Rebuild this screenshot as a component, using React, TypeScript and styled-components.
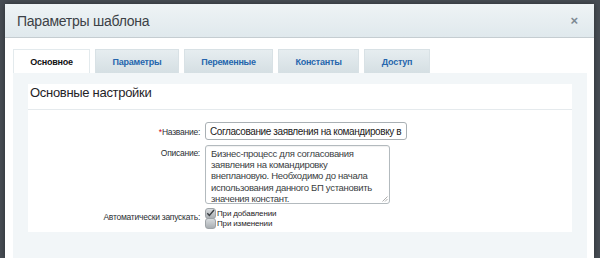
import React from "react";
import styled, { createGlobalStyle } from "styled-components";

const Global = createGlobalStyle`
  html, body { margin: 0; padding: 0; }
  body {
    background: #474d54;
    font-family: "Liberation Sans", Arial, sans-serif;
    height: 258px;
    overflow: hidden;
  }
`;

const Dialog = styled.div`
  margin: 4px 6px 0 5px;
  height: 254px;
  background: #fff;
  box-shadow: 0 0 6px rgba(0, 0, 0, 0.4);
  display: flex;
  flex-direction: column;
`;

const Header = styled.div`
  height: 33px;
  flex: none;
  background: linear-gradient(#eef3f5, #e0e9ed);
  border-bottom: 1px solid #c5cdd1;
  display: flex;
  align-items: center;
  justify-content: space-between;
  padding: 0 16px 0 12px;
`;

const Title = styled.div`
  font-size: 14px;
  letter-spacing: -0.25px;
  color: #3c4146;
  padding-top: 1px;
`;

const Close = styled.div`
  font-size: 13px;
  color: #7c8992;
  font-weight: bold;
  line-height: 1;
`;

const Body = styled.div`
  flex: 1;
  padding: 11px 7px 0 8px;
  display: flex;
  flex-direction: column;
`;

const Tabs = styled.div`
  display: flex;
  gap: 5px;
  height: 24px;
`;

const Tab = styled.div<{ $active?: boolean; $w: number }>`
  width: ${(p) => p.$w}px;
  height: 24px;
  display: flex;
  align-items: center;
  justify-content: center;
  font-size: 9px;
  letter-spacing: -0.25px;
  font-weight: bold;
  color: ${(p) => (p.$active ? "#111" : "#2666ad")};
  background: ${(p) =>
    p.$active ? "#fff" : "linear-gradient(#e6edf0, #d5dfe3)"};
  border: 1px solid ${(p) => (p.$active ? "#e3eaed" : "#d8e1e5")};
  border-bottom: none;
  box-sizing: border-box;
  padding-top: 1px;
`;

const Panel = styled.div`
  flex: 1;
  background: #f2f6f8;
  padding: 11px 15px 18px 15px;
  display: flex;
  flex-direction: column;
`;

const Card = styled.div`
  background: #fff;
  display: flex;
  flex-direction: column;
`;

const CardTitle = styled.div`
  font-size: 13px;
  letter-spacing: -0.3px;
  color: #1f2327;
  padding: 1px 0 0 2px;
  box-sizing: border-box;
  border-bottom: 1px solid #e5eaed;
  height: 26px;
`;

const Form = styled.div`
  display: grid;
  grid-template-columns: 172px 1fr;
  column-gap: 5px;
  row-gap: 5px;
  padding: 12px 0 3px 0;
  align-items: start;
`;

const Label = styled.div<{ $center?: boolean }>`
  font-size: 8.5px;
  letter-spacing: -0.25px;
  color: #2b2f33;
  text-align: right;
  padding-top: ${(p) => (p.$center ? "5px" : "3px")};
`;

const Req = styled.span`
  color: #d0021b;
`;

const Input = styled.div`
  width: 202px;
  height: 18px;
  box-sizing: border-box;
  border: 1px solid #a9b0b4;
  border-radius: 3px;
  font-size: 10px;
  letter-spacing: -0.4px;
  color: #222;
  padding: 3px 0 0 4px;
  white-space: nowrap;
  overflow: hidden;
`;

const TextArea = styled.div`
  position: relative;
  width: 185px;
  height: 59px;
  box-sizing: border-box;
  border: 1px solid #b3babe;
  border-radius: 3px;
  box-shadow: inset 0 1px 1px rgba(0, 0, 0, 0.06);
  font-size: 9.5px;
  letter-spacing: -0.3px;
  line-height: 11.2px;
  color: #3a3e42;
  padding: 2px 4px 0 5px;
`;

const Line = styled.div`
  white-space: nowrap;
`;

const Grip = styled.svg`
  position: absolute;
  right: 1px;
  bottom: 1px;
`;

const Checks = styled.div`
  display: flex;
  flex-direction: column;
  margin-top: -1px;
`;

const CheckRow = styled.div`
  display: flex;
  align-items: center;
  height: 10.5px;
  font-size: 8px;
  letter-spacing: -0.15px;
  color: #1f2327;
`;

const Box = styled.span`
  width: 11px;
  height: 11px;
  box-sizing: border-box;
  border-radius: 3px;
  background: linear-gradient(#d8dcdf, #a9aeb2);
  border: 1px solid #9ea3a7;
  margin-right: 1px;
  display: inline-flex;
  align-items: center;
  justify-content: center;
`;

const Check = () => (
  <svg width="9" height="8" viewBox="0 0 9 8">
    <path d="M1.3 4.2 L3.4 6.4 L8 1" stroke="#3a3e42" strokeWidth="1.4" fill="none" />
  </svg>
);

export default function App() {
  return (
    <>
      <Global />
      <Dialog>
        <Header>
          <Title>Параметры шаблона</Title>
          <Close>×</Close>
        </Header>
        <Body>
          <Tabs>
            <Tab $active $w={77}>Основное</Tab>
            <Tab $w={84}>Параметры</Tab>
            <Tab $w={89}>Переменные</Tab>
            <Tab $w={81}>Константы</Tab>
            <Tab $w={66}>Доступ</Tab>
          </Tabs>
          <Panel>
            <Card>
              <CardTitle>Основные настройки</CardTitle>
              <Form>
                <Label $center>
                  <Req>*</Req>Название:
                </Label>
                <Input>Согласование заявления на командировку в</Input>
                <Label>Описание:</Label>
                <TextArea>
                  <Line>Бизнес-процесс для согласования</Line>
                  <Line>заявления на командировку</Line>
                  <Line>внеплановую. Необходимо до начала</Line>
                  <Line>использования данного БП установить</Line>
                  <Line>значения констант.</Line>
                  <Grip width="6" height="6" viewBox="0 0 6 6">
                    <path d="M5.5 0.5 L0.5 5.5 M5.5 3 L3 5.5" stroke="#999" strokeWidth="0.8" />
                  </Grip>
                </TextArea>
                <Label>Автоматически запускать:</Label>
                <Checks>
                  <CheckRow>
                    <Box>
                      <Check />
                    </Box>
                    При добавлении
                  </CheckRow>
                  <CheckRow>
                    <Box />
                    При изменении
                  </CheckRow>
                </Checks>
              </Form>
            </Card>
          </Panel>
        </Body>
      </Dialog>
    </>
  );
}
